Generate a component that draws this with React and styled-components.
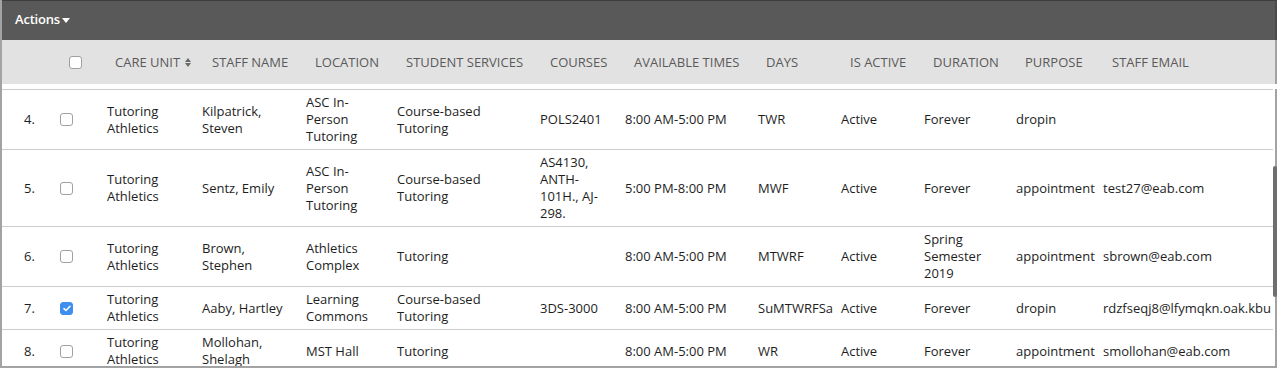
import styled, { createGlobalStyle } from "styled-components";

const GlobalStyle = createGlobalStyle`
    html, body {
        margin: 0;
        padding: 0;
        background: #FFFFFF;
    }
    body {
        font-family: "Open Sans", "Liberation Sans", sans-serif;
    }
`

const Frame = styled.div`
    width: 1277px;
    height: 368px;
    box-sizing: border-box;
    border-left: 2px solid #A3A3A3;
    border-bottom: 2px solid #A3A3A3;
    display: flex;
    flex-direction: column;
    overflow: hidden;
`

const Toolbar = styled.div`
    height: 40px;
    min-height: 40px;
    box-sizing: border-box;
    background: #595959;
    border-top: 1px solid #3E3E3E;
    border-right: 2px solid #4A4A4A;
    display: flex;
    align-items: center;
    padding-left: 13px;
`

const ActionsButton = styled.div`
    display: flex;
    align-items: center;
    gap: 2px;
    color: #FFFFFF;
    font-size: 13px;
    font-weight: 600;
    letter-spacing: -0.2px;
    margin-top: -3px;
`

const Caret = styled.span`
    width: 0;
    height: 0;
    border-left: 4px solid transparent;
    border-right: 4px solid transparent;
    border-top: 5px solid ${props => props.color || "#FFFFFF"};
    margin-top: 2px;
`

const HeaderRow = styled.div`
    display: grid;
    grid-template-columns: 67px 38px 97px 103px 91px 144px 84px 132px 84px 83px 92px 87px 1fr;
    height: 44px;
    min-height: 44px;
    background: #E2E2E2;
    border-right: 2px solid #A3A3A3;
    margin-bottom: 5px;
    box-sizing: border-box;
`

const HeadCell = styled.div`
    display: flex;
    align-items: center;
    gap: 5px;
    padding-left: ${props => props.$flush ? "0" : "8px"};
    font-size: 13px;
    color: #5A5A5A;
    text-transform: uppercase;
    white-space: nowrap;
`

const SortIcon = styled.span`
    display: flex;
    flex-direction: column;
    gap: 1px;
    >i{
        width: 0;
        height: 0;
        border-left: 3.5px solid transparent;
        border-right: 3.5px solid transparent;
    }
    >i:first-child{
        border-bottom: 4px solid #6A6A6A;
    }
    >i:last-child{
        border-top: 4px solid #6A6A6A;
    }
`

const BodyWrap = styled.div`
    flex: 1;
    display: flex;
    min-height: 0;
`

const Table = styled.div`
    flex: 1;
    overflow: hidden;
    border-top: 1px solid #CDCDCD;
`

const Row = styled.div`
    display: grid;
    grid-template-columns: 50px 47px 95px 104px 91px 143px 85px 133px 83px 83px 92px 87px 1fr;
    border-bottom: 1px solid #CDCDCD;
`

const Cell = styled.div`
    display: flex;
    align-items: center;
    padding: 4px 6px 4px ${props => props.$pad || "8px"};
    font-size: 13px;
    line-height: 17px;
    color: #1E1E1E;
    white-space: ${props => props.$nowrap ? "nowrap" : "normal"};
`

const Box = styled.span`
    width: 11px;
    height: 11px;
    border-radius: 3px;
    border: 1px solid ${props => props.$checked ? "#3D8EF0" : "#A0A0A0"};
    background: ${props => props.$checked ? "#3D8EF0" : "#FFFFFF"};
    display: flex;
    align-items: center;
    justify-content: center;
`

const ScrollTrack = styled.div`
    width: 4px;
    background: linear-gradient(to right, #FFFFFF 2px, #A3A3A3 2px);
`

const ScrollThumb = styled.div`
    margin-top: 77px;
    height: 131px;
    border-radius: 2px;
    background: #6F6F6F;
`

const Checkbox = ({checked}) => (
    <Box $checked={checked}>
        {checked &&
            <svg width="8" height="7" viewBox="0 0 8 7" fill="none">
                <path d="M1 3.6L3 5.5L7 1.2" stroke="#FFFFFF" strokeWidth="1.5" strokeLinecap="round" strokeLinejoin="round"/>
            </svg>
        }
    </Box>
)

const rows = [
    {n: 4, checked: false, unit: "Tutoring Athletics", staff: "Kilpatrick, Steven", location: "ASC In-Person Tutoring", services: "Course-based Tutoring", courses: "POLS2401", times: "8:00 AM-5:00 PM", days: "TWR", active: "Active", duration: "Forever", purpose: "dropin", email: ""},
    {n: 5, checked: false, unit: "Tutoring Athletics", staff: "Sentz, Emily", location: "ASC In-Person Tutoring", services: "Course-based Tutoring", courses: "AS4130, ANTH-101H., AJ-298.", times: "5:00 PM-8:00 PM", days: "MWF", active: "Active", duration: "Forever", purpose: "appointment", email: "test27@eab.com"},
    {n: 6, checked: false, unit: "Tutoring Athletics", staff: "Brown, Stephen", location: "Athletics Complex", services: "Tutoring", courses: "", times: "8:00 AM-5:00 PM", days: "MTWRF", active: "Active", duration: "Spring Semester 2019", purpose: "appointment", email: "sbrown@eab.com"},
    {n: 7, checked: true, unit: "Tutoring Athletics", staff: "Aaby, Hartley", location: "Learning Commons", services: "Course-based Tutoring", courses: "3DS-3000", times: "8:00 AM-5:00 PM", days: "SuMTWRFSa", active: "Active", duration: "Forever", purpose: "dropin", email: "rdzfseqj8@lfymqkn.oak.kbu"},
    {n: 8, checked: false, unit: "Tutoring Athletics", staff: "Mollohan, Shelagh", location: "MST Hall", services: "Tutoring", courses: "", times: "8:00 AM-5:00 PM", days: "WR", active: "Active", duration: "Forever", purpose: "appointment", email: "smollohan@eab.com"},
]

const headers = ["Staff Name", "Location", "Student Services", "Courses", "Available Times", "Days", "Is Active", "Duration", "Purpose", "Staff Email"]

const App = () => {
    return(
        <>
            <GlobalStyle />
            <Frame>
                <Toolbar>
                    <ActionsButton>Actions<Caret /></ActionsButton>
                </Toolbar>
                <HeaderRow>
                    <HeadCell />
                    <HeadCell $flush><Checkbox checked={false} /></HeadCell>
                    <HeadCell>Care Unit<SortIcon><i /><i /></SortIcon></HeadCell>
                    {headers.map(h => <HeadCell key={h}>{h}</HeadCell>)}
                </HeaderRow>
                <BodyWrap>
                    <Table>
                        {rows.map(r => (
                            <Row key={r.n}>
                                <Cell $pad="22px">{r.n}.</Cell>
                                <Cell><Checkbox checked={r.checked} /></Cell>
                                <Cell>{r.unit}</Cell>
                                <Cell>{r.staff}</Cell>
                                <Cell>{r.location}</Cell>
                                <Cell>{r.services}</Cell>
                                <Cell>{r.courses}</Cell>
                                <Cell $nowrap>{r.times}</Cell>
                                <Cell $nowrap>{r.days}</Cell>
                                <Cell>{r.active}</Cell>
                                <Cell>{r.duration}</Cell>
                                <Cell $nowrap>{r.purpose}</Cell>
                                <Cell $nowrap>{r.email}</Cell>
                            </Row>
                        ))}
                    </Table>
                    <ScrollTrack>
                        <ScrollThumb />
                    </ScrollTrack>
                </BodyWrap>
            </Frame>
        </>
    )
}

export default App;
